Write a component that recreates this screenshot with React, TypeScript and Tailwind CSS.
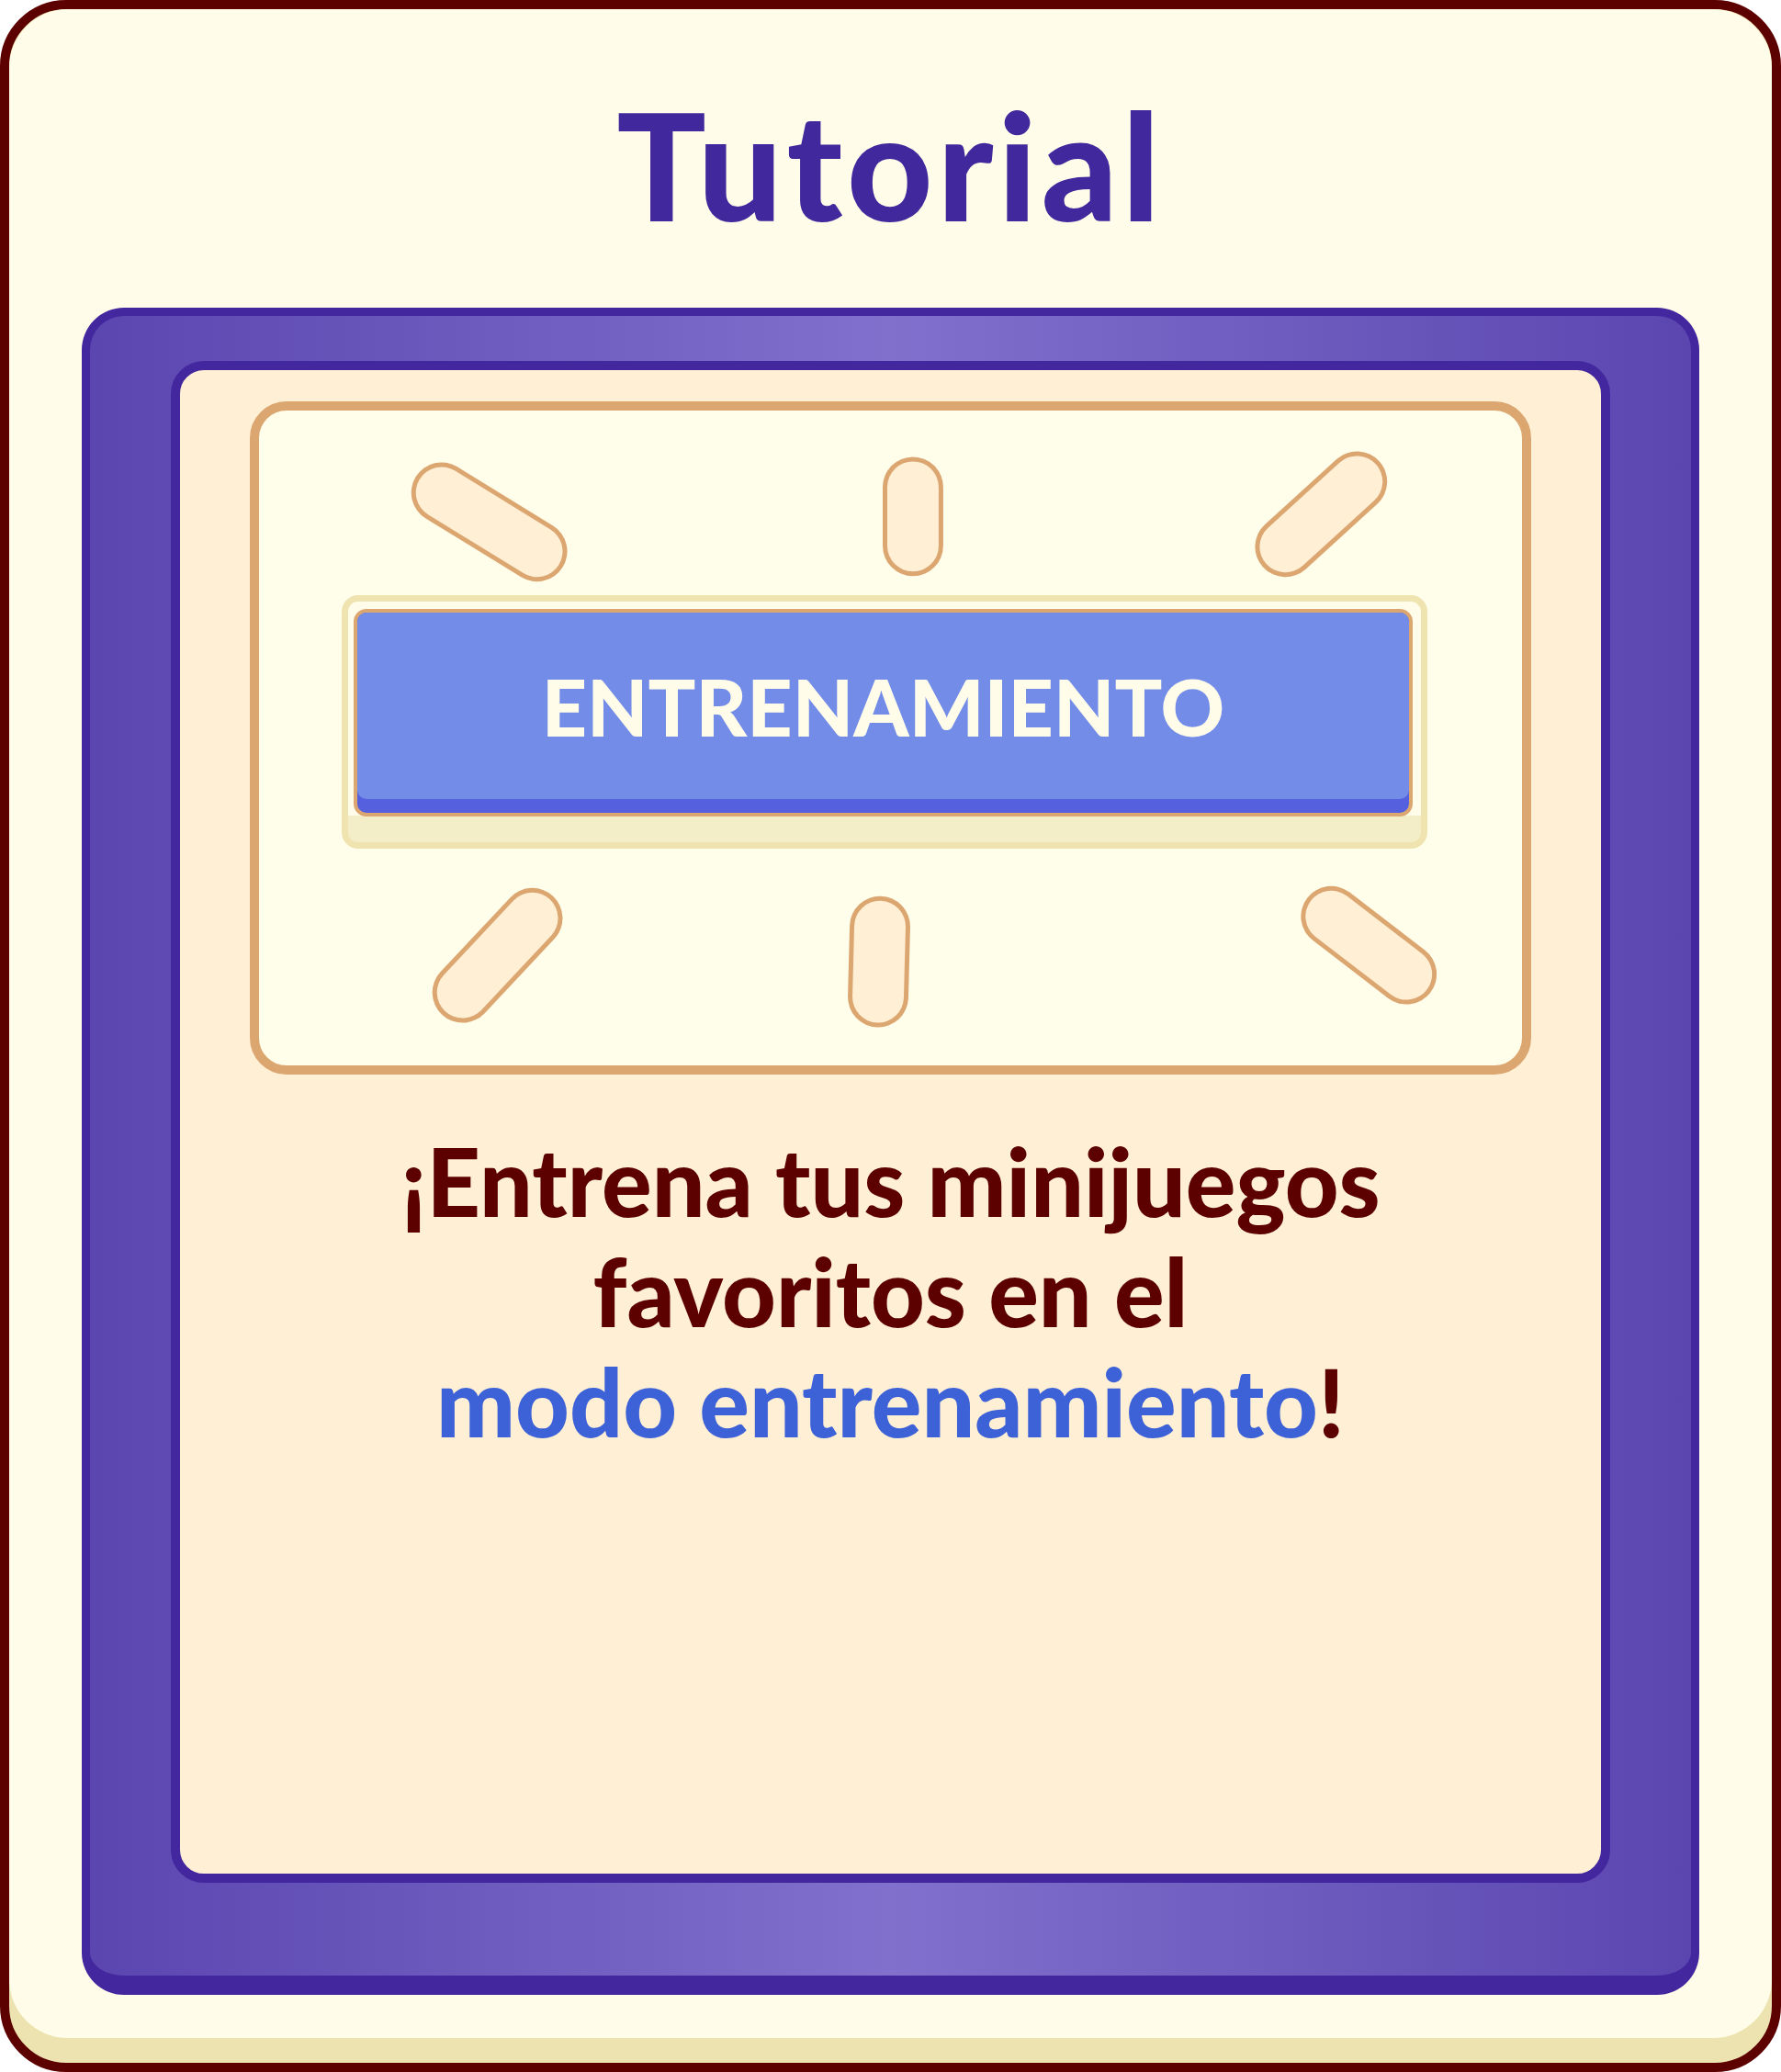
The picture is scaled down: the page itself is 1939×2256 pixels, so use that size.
const pills: [number, number, number, number][] = [
  [199, 88, 303, 152],
  [713, 82, 713, 146],
  [1119, 147, 1197, 76],
  [222, 633, 298, 552],
  [677, 561, 675, 638],
  [1169, 550, 1251, 613],
];

function Rays() {
  return (
    <svg className="absolute inset-0 h-full w-full" viewBox="0 0 1377 711" fill="none">
      {pills.map(([x1, y1, x2, y2], i) => (
        <g key={i}>
          <line x1={x1} y1={y1} x2={x2} y2={y2} stroke="#dca671" strokeWidth={66} strokeLinecap="round" />
          <line x1={x1} y1={y1} x2={x2} y2={y2} stroke="#ffefd5" strokeWidth={56} strokeLinecap="round" />
        </g>
      ))}
    </svg>
  );
}

export default function App() {
  return (
    <div className="h-[2256px] w-[1939px] bg-white" style={{ fontFamily: "Lato, 'Noto Sans', sans-serif" }}>
      <div className="flex h-full flex-col overflow-hidden rounded-[72px] border-[10px] border-[#5c0000] bg-[#ede3b0] pb-[27px]">
        <div className="flex flex-1 flex-col rounded-[64px] bg-[#fffde9] px-[79px] pb-[47px]">
          <h1 className="pt-[94px] text-center text-[162px] font-black leading-[150px] tracking-[5px] text-[#42289d]">Tutorial</h1>

          <div className="mt-[81px] flex flex-1 flex-col rounded-[46px] border-[9px] border-b-[21px] border-[#43279e] bg-gradient-to-r from-[#5b46b0] via-[#8170cc] to-[#5b46b0] px-[88px] pb-[101px] pt-[49px]">
            <div className="flex flex-1 flex-col rounded-[36px] border-[10px] border-[#43279e] bg-[#ffefd5] px-[76px] pt-[34px]">
              <div className="relative rounded-[40px] border-[10px] border-[#dca671] bg-[#fffeea] pb-[236px] pl-[90px] pt-[201px]">
                <Rays />
                <div className="relative w-[1182px] rounded-[18px] border-[7px] border-[#efe3b0] bg-[linear-gradient(to_bottom,#fffde9_0px,#fffde9_233px,#f4eec8_233px)] pb-[28px] pl-[6px] pr-[9px] pt-[8px]">
                  <div className="rounded-[14px] border-[4px] border-[#dca671] bg-[#5560de] pb-[15px]">
                    <div className="flex h-[203px] items-center justify-center rounded-[10px] bg-[#728ce8]">
                      <span className="text-[86px] font-black text-[#fffde9]">ENTRENAMIENTO</span>
                    </div>
                  </div>
                </div>
              </div>

              <p className="mt-[56px] text-center text-[102px] font-black leading-[120px] text-[#5c0000]">
                ¡Entrena tus minijuegos
                <br />
                favoritos en el
                <br />
                <span className="text-[#3d62d8]">modo entrenamiento</span>!
              </p>
            </div>
          </div>
        </div>
      </div>
    </div>
  );
}
